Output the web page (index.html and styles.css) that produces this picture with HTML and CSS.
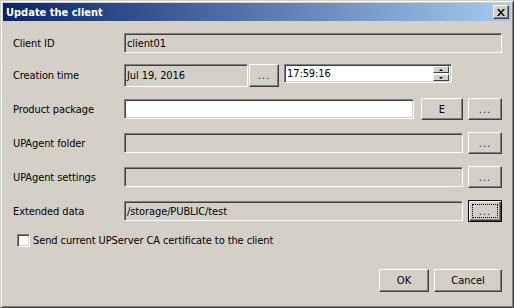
FILE: index.html
```html
<!DOCTYPE html>
<html lang="en">
<head>
    <meta charset="UTF-8">
    <title>Update the client</title>
    <link rel="stylesheet" href="styles.css">
</head>
<body>
    <div class="window">
        <div class="titlebar">
            <span class="title">Update the client</span>
            <button class="close-btn" title="Close">
                <svg width="8" height="7" viewBox="0 0 8 7">
                    <path d="M0 0h2l2 2.5 2-2.5h2l-3 3.5 3 3.5h-2l-2-2.5-2 2.5h-2l3-3.5z" fill="#000"/>
                </svg>
            </button>
        </div>

        <div class="dialog">
            <div class="row">
                <label>Client ID</label>
                <div class="field readonly grow">client01</div>
            </div>

            <div class="row row-time">
                <label>Creation time</label>
                <div class="field readonly date">Jul 19, 2016</div>
                <button class="btn btn-dots btn-date">...</button>
                <div class="field time">
                    <span>17:59:16</span>
                    <div class="spin">
                        <span class="spin-btn"><i class="arrow-up"></i></span>
                        <span class="spin-btn"><i class="arrow-down"></i></span>
                    </div>
                </div>
            </div>

            <div class="row row-package">
                <label>Product package</label>
                <div class="field grow"></div>
                <button class="btn btn-e">E</button>
                <button class="btn btn-dots">...</button>
            </div>

            <div class="row">
                <label>UPAgent folder</label>
                <div class="field readonly grow"></div>
                <button class="btn btn-dots">...</button>
            </div>

            <div class="row">
                <label>UPAgent settings</label>
                <div class="field readonly grow"></div>
                <button class="btn btn-dots">...</button>
            </div>

            <div class="row">
                <label>Extended data</label>
                <div class="field readonly grow">/storage/PUBLIC/test</div>
                <button class="btn btn-dots btn-default">...</button>
            </div>

            <div class="check-row">
                <span class="checkbox"></span>
                <span>Send current UPServer CA certificate to the client</span>
            </div>

            <div class="actions">
                <button class="btn btn-ok">OK</button>
                <button class="btn btn-cancel">Cancel</button>
            </div>
        </div>
    </div>
</body>
</html>
```

FILE: styles.css
```css
* {
    margin: 0;
    padding: 0;
    box-sizing: border-box;
}

body {
    font-family: 'DejaVu Sans Condensed', 'DejaVu Sans', sans-serif;
    font-size: 11px;
    letter-spacing: -0.1px;
    color: #000;
    background-color: #d4d0c8;
}

.window {
    width: 514px;
    height: 308px;
    padding: 2px;
    background-color: #d4d0c8;
    border: 1px solid;
    border-color: #d4d0c8 #404040 #404040 #d4d0c8;
    box-shadow: inset 1px 1px #fff, inset -1px -1px #808080;
}

.titlebar {
    height: 18px;
    padding: 0 2px 0 3px;
    display: flex;
    align-items: center;
    justify-content: space-between;
    background: linear-gradient(to right, #0a246a, #a6caf0);
}

.title {
    color: #fff;
    font-weight: bold;
    font-size: 11px;
    letter-spacing: 0;
}

.close-btn {
    width: 16px;
    height: 14px;
    display: flex;
    align-items: center;
    justify-content: center;
    background-color: #d4d0c8;
    border: 1px solid;
    border-color: #fff #404040 #404040 #fff;
    box-shadow: inset -1px -1px #808080;
}

.dialog {
    padding: 11px 9px 0 10px;
}

.row {
    height: 22px;
    display: flex;
    align-items: center;
    gap: 5px;
    margin-bottom: 12px;
}

.row label {
    width: 111px;
    margin-right: -5px;
    align-self: center;
}

.field {
    height: 20px;
    padding: 0 2px;
    display: flex;
    align-items: center;
    background-color: #fff;
    border: 1px solid;
    border-color: #808080 #fff #fff #808080;
    box-shadow: inset 1px 1px #404040, inset -1px -1px #d4d0c8;
    white-space: nowrap;
}

.field.readonly {
    background-color: #d4d0c8;
}

.grow {
    flex: 1;
}

.btn {
    height: 22px;
    font-family: inherit;
    font-size: 11px;
    color: #000;
    background-color: #d4d0c8;
    border: 1px solid;
    border-color: #fff #404040 #404040 #fff;
    box-shadow: inset -1px -1px #808080, inset 1px 1px #d4d0c8;
}

.btn-dots {
    width: 34px;
    color: #1a1050;
    letter-spacing: 1px;
}

.btn-e {
    width: 42px;
    margin-left: 1px;
}

.btn-default {
    border-color: #000;
    box-shadow: inset 1px 1px #fff, inset -1px -1px #404040, inset -2px -2px #808080;
    outline: 1px dotted #000;
    outline-offset: -5px;
}

.row-time {
    height: 23px;
    align-items: flex-start;
    margin-top: -2px;
    margin-bottom: 11px;
}

.row-time .date {
    width: 124px;
    height: 23px;
}

.row-time .btn-date {
    width: 30px;
    height: 23px;
    margin-left: -4px;
}

.row-time .time {
    width: 168px;
    height: 19px;
    justify-content: space-between;
    padding-right: 2px;
}

.spin {
    display: flex;
    flex-direction: column;
    gap: 1px;
}

.spin-btn {
    width: 16px;
    height: 7px;
    display: flex;
    align-items: center;
    justify-content: center;
    background-color: #d4d0c8;
    border: 1px solid;
    border-color: #fff #404040 #404040 #fff;
}

.arrow-up {
    border-left: 2px solid transparent;
    border-right: 2px solid transparent;
    border-bottom: 2px solid #000;
}

.arrow-down {
    border-left: 2px solid transparent;
    border-right: 2px solid transparent;
    border-top: 2px solid #000;
}

.row-package .grow {
    margin-right: 1px;
}

.check-row {
    height: 13px;
    display: flex;
    align-items: center;
    gap: 3px;
    margin-top: 2px;
    padding-left: 4px;
}

.checkbox {
    width: 13px;
    height: 13px;
    background-color: #fff;
    border: 1px solid;
    border-color: #808080 #fff #fff #808080;
    box-shadow: inset 1px 1px #404040, inset -1px -1px #d4d0c8;
}

.actions {
    display: flex;
    justify-content: flex-end;
    gap: 5px;
    margin-top: 22px;
}

.actions .btn {
    height: 23px;
}

.btn-ok {
    width: 50px;
}

.btn-cancel {
    width: 68px;
}
```
